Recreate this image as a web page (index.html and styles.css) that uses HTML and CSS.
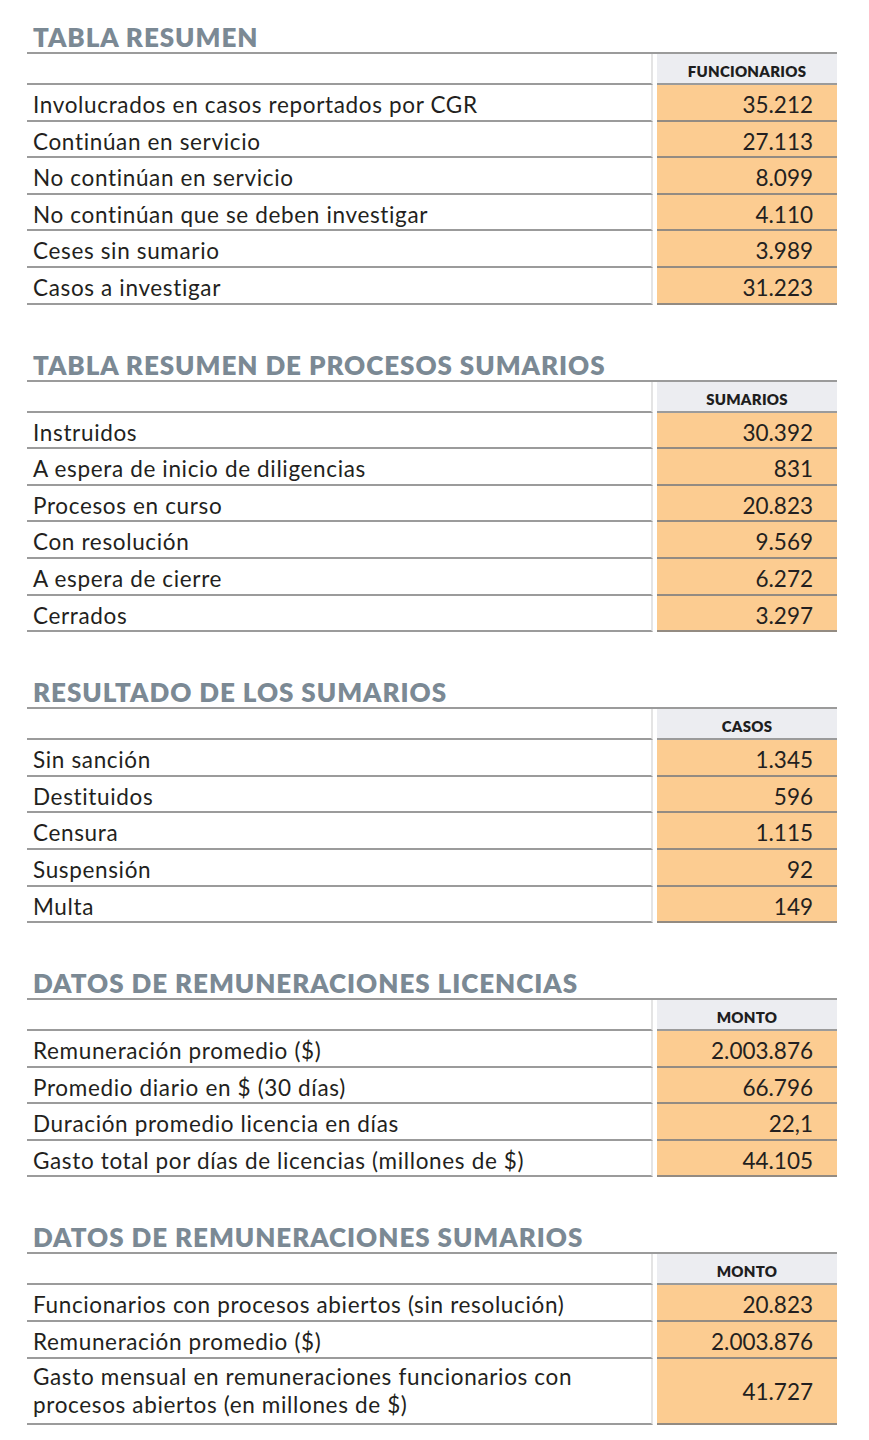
FILE: index.html
```html
<!DOCTYPE html>
<html lang="es">
<head>
<meta charset="utf-8">
<title>Tablas resumen</title>
<link rel="stylesheet" href="styles.css">
</head>
<body>
<main class="page">
  <section class="block">
    <h2 class="title">TABLA RESUMEN</h2>
    <div class="grid">
      <div class="lcell head"></div><div class="rcell head">FUNCIONARIOS</div>
      <div class="lcell">Involucrados en casos reportados por CGR</div><div class="rcell">35.212</div>
      <div class="lcell">Continúan en servicio</div><div class="rcell">27.113</div>
      <div class="lcell">No continúan en servicio</div><div class="rcell">8.099</div>
      <div class="lcell">No continúan que se deben investigar</div><div class="rcell">4.110</div>
      <div class="lcell">Ceses sin sumario</div><div class="rcell">3.989</div>
      <div class="lcell">Casos a investigar</div><div class="rcell">31.223</div>
    </div>
  </section>

  <section class="block">
    <h2 class="title">TABLA RESUMEN DE PROCESOS SUMARIOS</h2>
    <div class="grid">
      <div class="lcell head"></div><div class="rcell head">SUMARIOS</div>
      <div class="lcell">Instruidos</div><div class="rcell">30.392</div>
      <div class="lcell">A espera de inicio de diligencias</div><div class="rcell">831</div>
      <div class="lcell">Procesos en curso</div><div class="rcell">20.823</div>
      <div class="lcell">Con resolución</div><div class="rcell">9.569</div>
      <div class="lcell">A espera de cierre</div><div class="rcell">6.272</div>
      <div class="lcell">Cerrados</div><div class="rcell">3.297</div>
    </div>
  </section>

  <section class="block">
    <h2 class="title">RESULTADO DE LOS SUMARIOS</h2>
    <div class="grid">
      <div class="lcell head"></div><div class="rcell head">CASOS</div>
      <div class="lcell">Sin sanción</div><div class="rcell">1.345</div>
      <div class="lcell">Destituidos</div><div class="rcell">596</div>
      <div class="lcell">Censura</div><div class="rcell">1.115</div>
      <div class="lcell">Suspensión</div><div class="rcell">92</div>
      <div class="lcell">Multa</div><div class="rcell">149</div>
    </div>
  </section>

  <section class="block">
    <h2 class="title">DATOS DE REMUNERACIONES LICENCIAS</h2>
    <div class="grid">
      <div class="lcell head"></div><div class="rcell head">MONTO</div>
      <div class="lcell">Remuneración promedio ($)</div><div class="rcell">2.003.876</div>
      <div class="lcell">Promedio diario en $ (30 días)</div><div class="rcell">66.796</div>
      <div class="lcell">Duración promedio licencia en días</div><div class="rcell">22,1</div>
      <div class="lcell">Gasto total por días de licencias (millones de $)</div><div class="rcell">44.105</div>
    </div>
  </section>

  <section class="block">
    <h2 class="title">DATOS DE REMUNERACIONES SUMARIOS</h2>
    <div class="grid">
      <div class="lcell head"></div><div class="rcell head">MONTO</div>
      <div class="lcell">Funcionarios con procesos abiertos (sin resolución)</div><div class="rcell">20.823</div>
      <div class="lcell">Remuneración promedio ($)</div><div class="rcell">2.003.876</div>
      <div class="lcell tall">Gasto mensual en remuneraciones funcionarios con procesos abiertos (en millones de $)</div><div class="rcell tall">41.727</div>
    </div>
  </section>
</main>
</body>
</html>
```

FILE: styles.css
```css
html, body {
  margin: 0;
  padding: 0;
  background: #ffffff;
}

.page {
  padding: 0 32px 0 27px;
  font-family: "Lato", "Liberation Sans", sans-serif;
  color: #231f20;
}

.block {
  margin-top: 45px;
}

.block:first-child {
  margin-top: 22px;
}

.title {
  margin: 0;
  padding: 0 0 0 6px;
  font-size: 26px;
  line-height: 30px;
  font-weight: 800;
  color: #7b8994;
  letter-spacing: 0.95px;
  border-bottom: 2px solid #9b9b9b;
}

.grid {
  display: grid;
  grid-template-columns: 1fr 180px;
  column-gap: 4px;
}

.lcell {
  box-sizing: border-box;
  height: 36.6px;
  padding: 6px 6px 0 6px;
  font-size: 22.5px;
  line-height: 28px;
  letter-spacing: 0.65px;
  border-bottom: 2px solid #9b9b9b;
  border-right: 2px solid #e4e4e4;
}

.rcell {
  box-sizing: border-box;
  height: 36.6px;
  padding: 6px 24px 0 6px;
  font-size: 22.5px;
  line-height: 28px;
  text-align: right;
  background: #fccc91;
  border-bottom: 2px solid #938b82;
}

.lcell.head,
.rcell.head {
  height: 31px;
}

.rcell.head {
  background: #ecedf1;
  border-bottom-color: #9b9b9b;
  padding: 7px 0 0 0;
  text-align: center;
  font-size: 15px;
  line-height: 20px;
  font-weight: 800;
  letter-spacing: 0.25px;
  color: #1e1e1e;
}

.lcell.tall,
.rcell.tall {
  height: 66px;
}

.lcell.tall {
  padding-top: 4px;
}

.rcell.tall {
  padding-top: 19px;
}
```
